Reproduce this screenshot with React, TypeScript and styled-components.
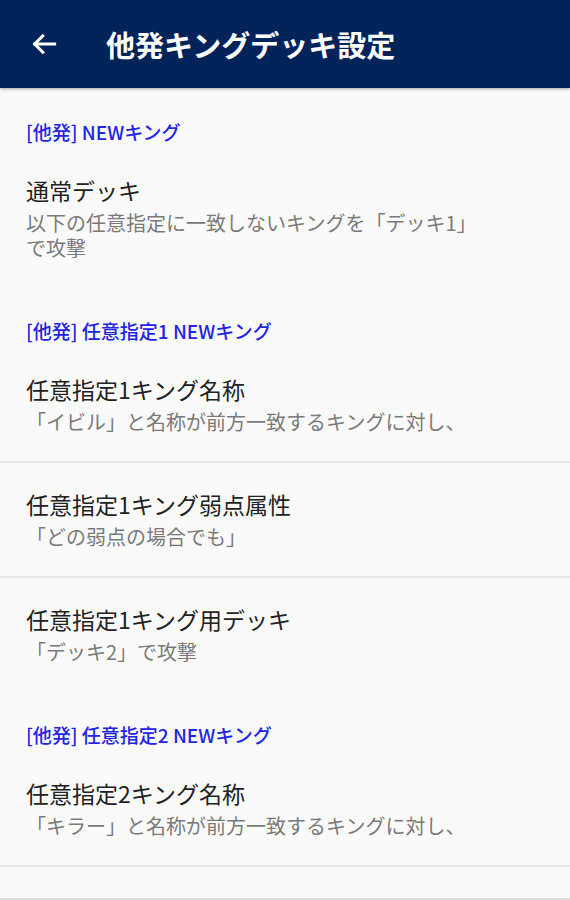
import React from 'react'
import styled, { createGlobalStyle } from 'styled-components'

const GlobalStyle = createGlobalStyle`
  html, body {
    margin: 0;
    padding: 0;
    background: #fafafa;
  }
  body {
    font-family: 'Noto Sans CJK JP', 'Noto Sans', Roboto, sans-serif;
  }
`

const Screen = styled.div`
  width: 570px;
  height: 900px;
  box-sizing: border-box;
  overflow: hidden;
  background: #fafafa;
  border-bottom: 2px solid #dedede;
`

const AppBar = styled.header`
  display: flex;
  align-items: center;
  height: 88px;
  background: #00235a;
  box-shadow: 0 1px 3px rgba(0, 0, 0, 0.35);
  position: relative;
  z-index: 1;
`

const BackButton = styled.button`
  display: flex;
  align-items: center;
  justify-content: center;
  width: 32px;
  height: 32px;
  margin-left: 28px;
  padding: 0;
  border: none;
  background: transparent;
  color: #fff;
  cursor: pointer;
`

const Title = styled.h1`
  margin: 0 0 0 46px;
  font-size: 29px;
  line-height: 1;
  font-weight: 700;
  color: #fff;
  letter-spacing: 0;
`

const List = styled.div`
  display: flex;
  flex-direction: column;
`

const Category = styled.div`
  padding: 33px 26px 6px;
  font-size: 19px;
  line-height: 22px;
  font-weight: 500;
  color: #2424e6;
`

const Item = styled.div<{ $divider?: boolean }>`
  display: flex;
  flex-direction: column;
  padding: 26px 90px 27px 26px;
  border-bottom: ${({ $divider }) => ($divider ? '2px solid #e6e6e6' : 'none')};
`

const ItemTitle = styled.div`
  font-size: 23px;
  line-height: 30px;
  color: #222;
`

const ItemSummary = styled.div`
  margin-top: 5px;
  font-size: 20px;
  line-height: 25px;
  color: #7a7a7a;
`

type Pref = { title: string; summary: string; divider?: boolean }
type Section = { label: string; items: Pref[] }

const sections: Section[] = [
  {
    label: '[他発] NEWキング',
    items: [{ title: '通常デッキ', summary: '以下の任意指定に一致しないキングを「デッキ1」で攻撃' }],
  },
  {
    label: '[他発] 任意指定1 NEWキング',
    items: [
      { title: '任意指定1キング名称', summary: '「イビル」と名称が前方一致するキングに対し、', divider: true },
      { title: '任意指定1キング弱点属性', summary: '「どの弱点の場合でも」', divider: true },
      { title: '任意指定1キング用デッキ', summary: '「デッキ2」で攻撃' },
    ],
  },
  {
    label: '[他発] 任意指定2 NEWキング',
    items: [
      { title: '任意指定2キング名称', summary: '「キラー」と名称が前方一致するキングに対し、', divider: true },
    ],
  },
]

const BackArrow = () => (
  <svg width="30" height="30" viewBox="0 0 24 24" fill="none">
    <path d="M20.5 12H4.5M11 5.5L4.5 12l6.5 6.5" stroke="currentColor" strokeWidth="2.4" strokeLinecap="square" />
  </svg>
)

const App = () => (
  <>
    <GlobalStyle />
    <Screen>
      <AppBar>
        <BackButton aria-label="戻る">
          <BackArrow />
        </BackButton>
        <Title>他発キングデッキ設定</Title>
      </AppBar>
      <List>
        {sections.map((section) => (
          <React.Fragment key={section.label}>
            <Category>{section.label}</Category>
            {section.items.map((item) => (
              <Item key={item.title} $divider={item.divider}>
                <ItemTitle>{item.title}</ItemTitle>
                <ItemSummary>{item.summary}</ItemSummary>
              </Item>
            ))}
          </React.Fragment>
        ))}
      </List>
    </Screen>
  </>
)

export default App
